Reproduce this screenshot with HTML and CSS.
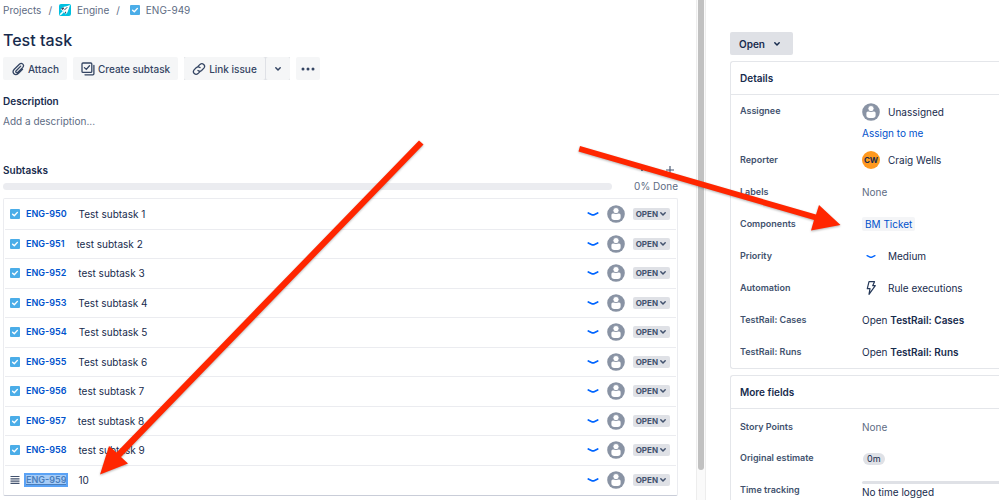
FILE: index.html
```html
<!DOCTYPE html>
<html lang="en">
<head>
<meta charset="utf-8">
<title>ENG-949 Test task</title>
<link rel="stylesheet" href="styles.css">
</head>
<body>
<svg class="defs" aria-hidden="true">
  <symbol id="task" viewBox="0 0 10 10"><rect width="10" height="10" rx="1" fill="#4bade8"/><path d="M2.6 5.2 4.3 6.8 7.4 3.4" fill="none" stroke="#fff" stroke-width="1.4" stroke-linecap="round" stroke-linejoin="round"/></symbol>
  <symbol id="user" viewBox="0 0 18 18"><circle cx="9" cy="9" r="8.8" fill="#8993a4"/><path d="M4.4 9.900q0-1.500 1.500-1.500h6.200q1.500 0 1.500 1.500v2.600q0 2.600-4.600 2.600t-4.600-2.600z" fill="#fff"/><circle cx="9" cy="5.600" r="3.100" fill="#fff" stroke="#8993a4" stroke-width=".9"/></symbol>
  <symbol id="low" viewBox="0 0 12 6"><path d="M1.300 2 4.800 3.700Q6 4.200 7.200 3.700L10.700 2" fill="none" stroke="#0065ff" stroke-width="1.700" stroke-linecap="round"/></symbol>
  <symbol id="chevron" viewBox="0 0 8 6"><path d="M1.800 1.800 4 4 6.200 1.800" fill="none" stroke="currentColor" stroke-width="1.500" stroke-linecap="round" stroke-linejoin="round"/></symbol>
</svg>
<div class="page">
  <main class="issue">
    <nav class="crumbs" aria-label="Breadcrumb">
      <a href="#">Projects</a><span class="slash">/</span>
      <a href="#"><svg class="project" viewBox="0 0 12 12"><rect width="12" height="12" rx="2" fill="#00c0e0"/><path d="M1.600 5.200 4.300 3 7.500 2.300 11 1 9.900 4.500 8.500 8.200 6.700 10.400 5.600 8.800z" fill="#fff"/><path d="M2 4.800 4.200 3.200 5.300 4.300 3.600 6z M6.100 7.200 7.300 8.500 6 10z" fill="#344563"/><path d="m1.200 10.800 3.200-3.200" stroke="#fff" stroke-width="1.500"/><path d="m5.300 6.200 3-3" stroke="#344563" stroke-width="1"/></svg>Engine</a><span class="slash">/</span>
      <a href="#" class="key-crumb"><svg class="type"><use href="#task"/></svg>ENG-949</a>
    </nav>
    <h1>Test task</h1>
    <div class="toolbar">
      <button type="button"><svg class="tool" viewBox="0 0 14 14"><path d="M9.700 4.100 5.200 8.700q-.9 1 0 1.700t1.700-.1l4.700-4.700q1.800-2 .2-3.500t-3.400.1L3.300 7.300q-2.300 2.500-.4 4.400t4.400-.2l4.200-4.200"/></svg>Attach</button>
      <button type="button"><svg class="tool" viewBox="0 0 14 14"><rect x="1" y="1" width="9.800" height="9.400" rx="1"/><path d="m3.400 5.600 1.900 1.800 3.200-3.700M12.900 3.400v8.300q0 1.100-1.100 1.100H4"/></svg>Create subtask</button>
      <div class="split">
        <button type="button"><svg class="tool" viewBox="0 0 14 14"><path d="m6 4.400 2-2q1.900-1.600 3.700 0t.2 3.700L9.600 8.400q-1.800 1.500-3.600 0M8 9.600l-2 2q-1.900 1.600-3.700 0t-.2-3.700l2.300-2.300q1.800-1.500 3.600 0"/></svg>Link issue</button>
        <button type="button" class="drop" aria-label="More link options"><svg class="chev"><use href="#chevron"/></svg></button>
      </div>
      <button type="button" class="more" aria-label="More actions"><svg class="dots" viewBox="0 0 14 4"><g fill="#344563"><circle cx="2" cy="2" r="1.500"/><circle cx="7" cy="2" r="1.500"/><circle cx="12" cy="2" r="1.500"/></g></svg></button>
    </div>
    <h2>Description</h2>
    <p class="muted">Add a description...</p>
    <div class="subhead">
      <h2>Subtasks</h2>
      <button type="button" aria-label="Subtask options"><svg class="dots" viewBox="0 0 14 4"><g fill="#42526e"><circle cx="3" cy="2" r="1"/><circle cx="7" cy="2" r="1"/><circle cx="11" cy="2" r="1"/></g></svg></button>
      <button type="button" aria-label="Add subtask"><svg class="plus" viewBox="0 0 10 10"><path d="M5 1v8M1 5h8" stroke="#42526e" stroke-width="1.100"/></svg></button>
    </div>
    <div class="progress"><div class="bar"></div><span>0% Done</span></div>
    <ul class="subtasks" id="subtasks"></ul>
  </main>
  <div class="scroll"><div class="thumb"></div></div>
  <aside class="side">
    <button type="button" class="state">Open <svg class="chev"><use href="#chevron"/></svg></button>
    <section class="card">
      <h2>Details</h2>
      <dl>
        <div class="field tall"><dt>Assignee</dt><dd><div class="person"><svg class="avatar"><use href="#user"/></svg>Unassigned</div><a href="#">Assign to me</a></dd></div>
        <div class="field"><dt>Reporter</dt><dd><div class="person"><span class="initials">CW</span>Craig Wells</div></dd></div>
        <div class="field"><dt>Labels</dt><dd class="none">None</dd></div>
        <div class="field"><dt>Components</dt><dd><a href="#" class="tag">BM Ticket</a></dd></div>
        <div class="field"><dt>Priority</dt><dd><div class="person"><span class="slot"><svg class="low small"><use href="#low"/></svg></span>Medium</div></dd></div>
        <div class="field"><dt>Automation</dt><dd><div class="person"><span class="slot"><svg class="bolt" viewBox="0 0 12 16"><path d="M4 1.700h5.500L7.700 5.700h2.600L4 14.300l1-5.600H2.300z" fill="none" stroke="#253858" stroke-width="1.200" stroke-linejoin="round"/></svg></span>Rule executions</div></dd></div>
        <div class="field"><dt>TestRail: Cases</dt><dd>Open <b>TestRail: Cases</b></dd></div>
        <div class="field"><dt>TestRail: Runs</dt><dd>Open <b>TestRail: Runs</b></dd></div>
      </dl>
    </section>
    <section class="card">
      <h2>More fields</h2>
      <dl>
        <div class="field"><dt>Story Points</dt><dd class="none">None</dd></div>
        <div class="field"><dt>Original estimate</dt><dd><span class="pill">0m</span></dd></div>
        <div class="field"><dt>Time tracking</dt><dd><div class="track"></div>No time logged</dd></div>
      </dl>
    </section>
  </aside>
  <svg class="arrows" viewBox="0 0 999 500" aria-hidden="true">
    <g fill="#ff2600">
      <path d="M419 140.500 423.500 144.500 121 457 128 463.500 100 474.500 109 446 116.500 452.500z"/>
      <path d="M580 146 816 214.500 819 205 840.500 225 811 230.500 814 220 578.500 151.500z"/>
    </g>
  </svg>
</div>
<script src="app.js"></script>
</body>
</html>
```
FILE: styles.css
```css
* { box-sizing: border-box; }
body { margin: 0; font: 10px/16px Inter, sans-serif; color: #172b4d; background: #fff; overflow: hidden; }
.defs { position: absolute; width: 0; height: 0; }
h1, h2, p, ul, dl, dd { margin: 0; padding: 0; }
a { color: #0052cc; text-decoration: none; }
button { font: inherit; color: inherit; border: 0; padding: 0; background: none; display: flex; align-items: center; justify-content: center; }
svg { display: block; flex: none; }
.page { position: relative; display: grid; grid-template-columns: minmax(0, 696fr) 10px minmax(0, 293fr); height: 100vh; }
.issue { display: flex; flex-direction: column; padding: 2px 18px 4px 3px; min-height: 0; }

.crumbs { display: flex; align-items: center; }
.crumbs a { display: flex; align-items: center; gap: 6px; color: #5e6c84; }
.slash { padding: 0 7px; color: #5e6c84; }
.key-crumb { padding-left: 3px; }
.project { width: 12px; height: 12px; }
.type { width: 10px; height: 10px; }
h1 { font-size: 16px; line-height: 20px; font-weight: 500; margin-top: 12px; }
.toolbar { display: flex; gap: 6px; margin-top: 7px; font-weight: 500; color: #344563; }
.toolbar button { height: 23px; padding: 0 8px; gap: 3px; background: #f5f6f7; border-radius: 2px; }
.tool { width: 14px; height: 14px; fill: none; stroke: #344563; stroke-width: 1.3; stroke-linecap: round; }
.split { display: flex; gap: 1px; background: #dfe1e6; }
.chev { width: 8px; height: 6px; }
.dots { width: 14px; height: 4px; }
.toolbar .more { padding: 0 5px; }
h2 { font-size: 10px; line-height: 16px; font-weight: 600; }
.toolbar + h2 { margin-top: 13px; }
.muted { color: #5e6c84; margin-top: 4px; }
.subhead { display: flex; align-items: center; gap: 12px; margin-top: 33px; padding-right: 3px; }
.subhead h2 { flex: 1; }
.plus { width: 10px; height: 10px; }
.progress { display: flex; align-items: center; gap: 22px; color: #5e6c84; }
.bar { flex: 1; height: 7px; border-radius: 4px; background: #ebecf0; }
.subtasks { flex: 1; display: flex; flex-direction: column; list-style: none; margin-top: 4px; padding: 1px; border-radius: 2px; border: 1px solid #ebecf0; border-bottom-color: #c9cdd8; }
.subtasks li { flex: 1; display: flex; align-items: center; min-height: 28px; padding: 0 6px 0 5px; border-bottom: 1px solid #ebecf0; }
.subtasks li:last-child { border-bottom: 0; }
.key { margin-left: 5px; padding: 0 1px; font-size: 9px; line-height: 12px; font-weight: 600; }
.key.selected { background: #a6ccf7; outline: 2px solid #5aa2f5; outline-offset: -1px; color: #4a7ebb; text-decoration: underline; }
.name { flex: 1; margin-left: 11px; }
.low { width: 12px; height: 6px; }
.low.small { width: 10px; height: 5px; }
.avatar { width: 18px; height: 18px; }
.subtasks .avatar { margin: 0 8px; }
.status { height: 12px; padding: 0 3px; gap: 1px; font-size: 8px; font-weight: 700; color: #42526e; background: #dfe1e6; border-radius: 2px; }

.scroll { background: #fafafa; border: solid #ededed; border-width: 0 1px; display: flex; justify-content: center; }
.thumb { width: 6px; height: 94%; background: #c1c1c1; border-radius: 0 0 3px 3px; }

.side { padding: 32px 0 0 24px; overflow: hidden; }
.state { height: 23px; padding: 0 12px 0 9px; gap: 8px; border-radius: 2px; background: #dfe1e6; font-weight: 600; }
.card { margin-top: 6px; border: 1px solid #e4e6ea; border-right: 0; border-radius: 3px 0 0 3px; }
.card h2 { padding: 8px 9px; border-bottom: 1px solid #e4e6ea; }
.card dl { padding: 2px 0 0 9px; }
.field { display: grid; grid-template-columns: 122px minmax(0, 1fr); align-items: center; min-height: 32px; }
.field.tall { align-items: start; padding-top: 6px; min-height: 47px; }
.card + .card .field:first-child { min-height: 31px; }
dt { font-size: 9px; font-weight: 600; color: #42526e; }
b { font-weight: 600; }
.person { display: flex; align-items: center; gap: 8px; }
.person + a { display: block; margin-top: 4px; }
.initials { width: 18px; height: 18px; border-radius: 50%; background: #ff991f; font-size: 8px; line-height: 18px; font-weight: 700; text-align: center; }
.slot { width: 18px; display: flex; justify-content: center; }
.bolt { width: 12px; height: 16px; }
.none { color: #5e6c84; }
.tag { padding: 1px 3px; border-radius: 2px; background: #f4f5f7; }
.pill { margin-left: 1px; padding: 0 4px; border-radius: 6px; background: #dfe1e6; font-size: 9px; line-height: 12px; display: inline-block; }
.track { height: 3px; background: #dfe1e6; border-radius: 2px 0 0 2px; }
.arrows { position: absolute; inset: 0; width: 100%; height: 100%; pointer-events: none; filter: drop-shadow(0 1px 1px rgba(0, 0, 0, .3)); }
```
FILE: app.js
```js
const names = ["Test subtask 1", "test subtask 2", "test subtask 3", "Test subtask 4", "Test subtask 5",
  "Test subtask 6", "test subtask 7", "test subtask 8", "test subtask 9", "10"];
const task = '<svg class="type"><use href="#task"/></svg>';
const drag = '<svg class="type" viewBox="0 0 10 10"><path d="M.5 1.500h9M.5 3.800h9M.5 6.100h9M.5 8.400h9" stroke="#42526e" stroke-width="1.200"/></svg>';
document.getElementById("subtasks").innerHTML = names.map((name, i) => {
  const last = i === names.length - 1;
  return `<li>${last ? drag : task}<a href="#" class="key${last ? " selected" : ""}">ENG-${950 + i}</a>
    <span class="name">${name}</span><svg class="low"><use href="#low"/></svg><svg class="avatar"><use href="#user"/></svg>
    <button type="button" class="status">OPEN<svg class="chev"><use href="#chevron"/></svg></button></li>`;
}).join("");
```
